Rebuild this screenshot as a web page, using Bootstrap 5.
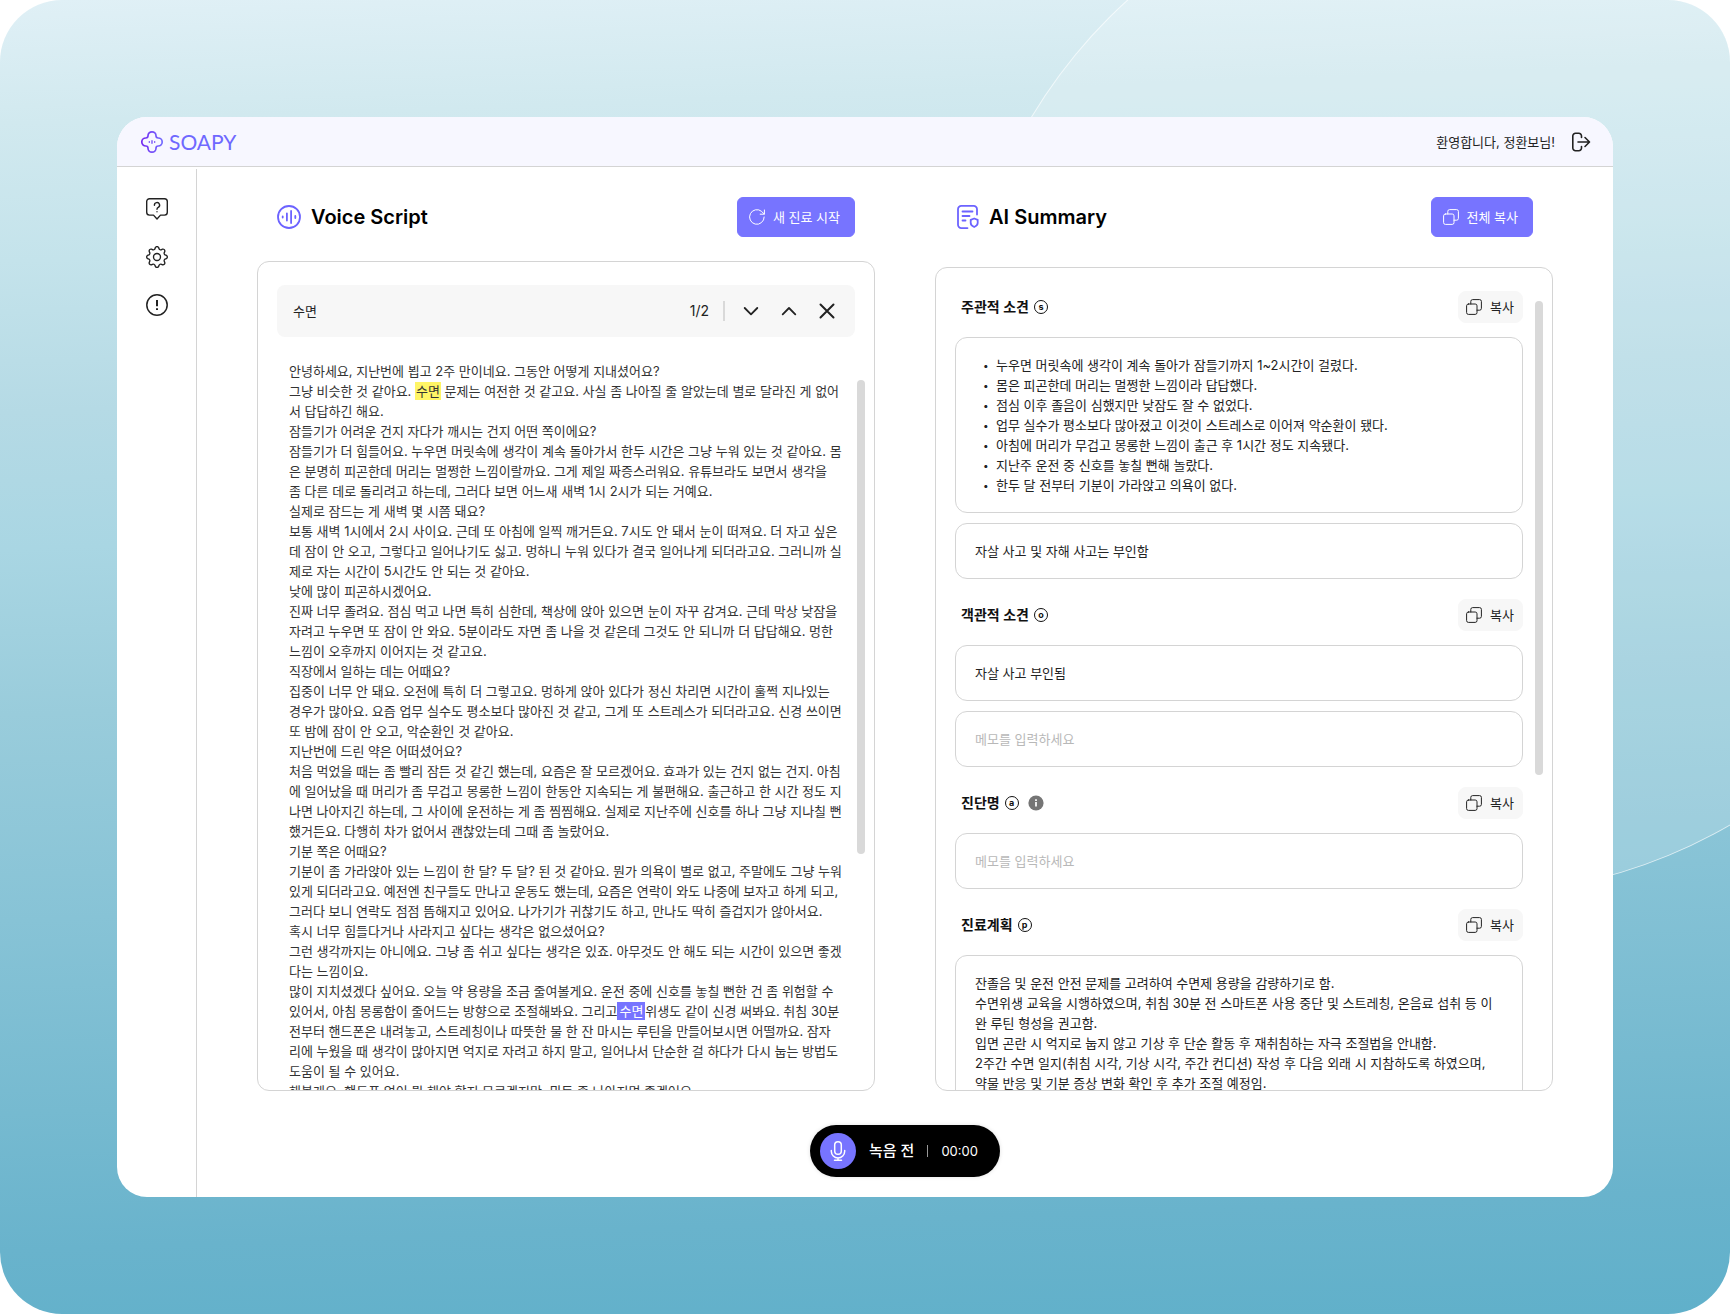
<!DOCTYPE html>
<html lang="ko">
<head>
<meta charset="utf-8">
<meta name="viewport" content="width=device-width, initial-scale=1">
<title>SOAPY</title>
<link href="https://cdn.jsdelivr.net/npm/bootstrap@5.3.0/dist/css/bootstrap.min.css" rel="stylesheet">
<style>
  :root { --soapy: #7774ff; --soapy-deep: #6c63ff; --line: #d4d4d4; --soft: #f7f7f7; }
  body { font-family: Inter, "Noto Sans CJK KR", sans-serif; font-size: 13px; line-height: 20px; color: #222; background: #fff; }
  svg { display: block; flex: none; fill: none; stroke: currentColor; stroke-linecap: round; stroke-linejoin: round; }
  .scene { position: relative; overflow: hidden; height: 100vh; min-height: 700px; padding: 117px; border-radius: 62px;
    background: linear-gradient(178deg, #e0f0f6 0%, #d1e9ef 9%, #c4e3eb 19%, #b5dae5 30%, #a9d6e3 40%, #99ccdb 52%, #87c3d6 67%, #76bad0 81%, #69b3cc 91%, #60b0ca 100%); }
  .halo { position: absolute; left: 958px; top: -133px; width: 1028px; height: 1028px; border-radius: 50%;
    background: rgba(255,255,255,.17); border: 1px solid rgba(255,255,255,.65); }
  .app-window { position: relative; height: 100%; border-radius: 30px; overflow: hidden; background: #fff; }
  .topbar { height: 50px; padding: 0 22px 0 23px; background: #f7f7ff; border-bottom: 1px solid var(--line); }
  .brand { font-family: Lato, sans-serif; font-size: 21px; color: #6f68ff; text-decoration: none; gap: 5px; }
  .side { width: 80px; margin-top: 2px; padding-top: 28px; gap: 24px; border-right: 1px solid var(--line); }
  .bare { display: block; padding: 0; border: 0; background: none; color: #222; }
  .workspace { padding: 30px 60px 20px; }
  .columns { gap: 60px; margin-bottom: 34px; }
  .pane { flex: 1 1 0; min-width: 0; min-height: 0; }
  .pane-head { height: 40px; padding: 0 20px; }
  .pane-title { font-size: 20px; line-height: 24px; font-weight: 600; color: #000; }
  .btn-soapy { --bs-btn-color: #fff; --bs-btn-bg: var(--soapy); --bs-btn-border-color: var(--soapy); --bs-btn-hover-color: #fff; --bs-btn-hover-bg: var(--soapy-deep);
    --bs-btn-font-size: 13px; --bs-btn-line-height: 20px; --bs-btn-padding-x: 11px; --bs-btn-padding-y: 9px; --bs-btn-border-radius: 6px; padding-right: 14px; }
  .btn-copy { --bs-btn-color: #222; --bs-btn-bg: var(--soft); --bs-btn-border-color: var(--soft); --bs-btn-hover-bg: #ececec;
    --bs-btn-font-size: 13px; --bs-btn-line-height: 20px; --bs-btn-padding-x: 8px; --bs-btn-padding-y: 5px; --bs-btn-border-radius: 8px; padding-left: 7px; }
  .panel { border: 1px solid var(--line); border-radius: 12px; overflow: hidden; min-height: 0; }
  .finder { height: 52px; margin: 23px 19px 24px; padding: 0 16px; gap: 14px; border-radius: 8px; background: var(--soft); }
  .finder input { min-width: 0; border: 0; padding: 0; background: none; font-size: 13px; color: #222; outline: 0; }
  .finder-rule { width: 2px; height: 20px; background: #d9d9d9; }
  .script-text { padding-left: 31px; color: #333; }
  .script-text p { margin: 0; }
  .hit, .hit-now { padding: 1px; background: #fff566; }
  .hit-now { padding: 1px 2px; color: #fff; background: var(--soapy); }
  .thumb { width: 8px; height: 474px; margin-right: 9px; border-radius: 4px; background: #d9d9d9; }
  .notes { padding: 23px 12px 0 19px; min-width: 0; }
  .note { margin-bottom: 20px; }
  .note-head { height: 32px; margin-bottom: 14px; padding-left: 6px; }
  .note-title { display: flex; align-items: center; gap: 5px; margin: 0; font-size: 14px; line-height: 20px; font-weight: 600; color: #111; }
  .ring { display: flex; align-items: center; justify-content: center; width: 14px; height: 14px; border: 1px solid #111; border-radius: 50%; font-size: 9px; line-height: 10px; padding-bottom: 1px; font-weight: 700; }
  .note-box { padding: 17px 19px; border: 1px solid var(--line); border-radius: 12px; font-size: 13px; line-height: 20px; color: #222; background: #fff; resize: none; overflow: hidden; }
  .note-box + .note-box { margin-top: 10px; }
  .note-box::placeholder { color: #b8b8b8; }
  .note-box ul { padding-left: 21px; list-style: none; }
  .note-box li::before { content: "•"; float: left; margin-left: -13px; font-size: 10px; }
  .recorder { height: 52px; padding: 0 22px 0 10px; gap: 13px; border: 0; color: #fff; background: #000; box-shadow: 0 0 4px rgba(0,0,0,.12); }
  .rec-dot { width: 36px; height: 36px; background: var(--soapy); }
  .rec-label { font-size: 15px; font-weight: 500; }
  .rec-rule { width: 1px; height: 12px; background: #999; }
</style>
</head>
<body>
<svg width="0" height="0" class="position-absolute" aria-hidden="true">
  <symbol id="copy" viewBox="0 0 16 16"><rect x=".6" y="5" width="10.4" height="10.4" rx="1.8"/><path d="M4.8 5V2.4A1.8 1.8 0 0 1 6.6.6h7A1.8 1.8 0 0 1 15.4 2.4v7a1.8 1.8 0 0 1-1.8 1.8H11"/></symbol>
</svg>
<div class="scene">
  <div class="halo"></div>
  <div class="app-window d-flex flex-column">
    <header class="topbar d-flex align-items-center justify-content-between flex-shrink-0">
      <a href="#" class="brand d-flex align-items-center">
        <svg width="24" height="24" viewBox="0 0 24 24" stroke="url(#lg)" stroke-width="1.7">
          <defs><linearGradient id="lg" gradientUnits="userSpaceOnUse" x1="1" y1="12" x2="23" y2="12"><stop stop-color="#7429f0"/><stop offset="1" stop-color="#736dff"/></linearGradient></defs>
          <path style="stroke:url(#lg)" d="M8 5.8a4 4 0 0 1 8 0 2.2 2.2 0 0 0 2.2 2.2 4 4 0 0 1 0 8 2.2 2.2 0 0 0-2.2 2.2 4 4 0 0 1-8 0A2.2 2.2 0 0 0 5.8 16a4 4 0 0 1 0-8A2.2 2.2 0 0 0 8 5.8Z"/>
          <path stroke="#7048f6" stroke-width="1.3" d="M9.3 11.7v.6M12 10.7v2.6M14.7 11.7v.6"/>
        </svg>
        <span>SOAPY</span>
      </a>
      <div class="d-flex align-items-center gap-3">
        <span>환영합니다, 정환보님!</span>
        <button class="bare" aria-label="로그아웃"><svg width="20" height="20" viewBox="0 0 20 20" stroke-width="1.6"><path d="M10.500 5.500V4A2.700 2.700 0 0 0 7.800 1.300H4.500A2.700 2.700 0 0 0 1.800 4v12a2.700 2.700 0 0 0 2.700 2.700h3.300a2.700 2.700 0 0 0 2.700-2.700v-1.500M7 10h11.300M14 5.500l4.500 4.500-4.500 4.500"/></svg></button>
      </div>
    </header>
    <div class="d-flex flex-grow-1" style="min-height:0">
      <nav class="side d-flex flex-column align-items-center flex-shrink-0" aria-label="메뉴">
        <button class="bare" aria-label="도움말"><svg width="24" height="24" viewBox="0 0 24 24" stroke-width="1.4"><path d="M4.500 1.700h15a2.800 2.800 0 0 1 2.800 2.800v10.800a2.800 2.800 0 0 1-2.800 2.800h-4L12 22l-3.500-3.900h-4a2.800 2.800 0 0 1-2.800-2.800V4.500a2.800 2.800 0 0 1 2.800-2.800Z"/><path d="M9.400 8.200a2.600 2.600 0 1 1 3.900 2.200c-.9.500-1.300.9-1.300 1.900M12 14.700v.1"/></svg></button>
        <button class="bare" aria-label="설정"><svg width="24" height="24" viewBox="-1 -1 24 24"><g transform="scale(1.375)" fill="currentColor" stroke="none"><path d="M8 4.954a3.046 3.046 0 1 0 0 6.092 3.046 3.046 0 0 0 0-6.092M5.954 8a2.046 2.046 0 1 1 4.092 0 2.046 2.046 0 0 1-4.092 0"/><path d="M9.796 1.343c-.527-1.790-3.065-1.790-3.592 0l-.094.319a.873.873 0 0 1-1.255.52l-.292-.16c-1.640-.892-3.433.902-2.540 2.541l.159.292a.873.873 0 0 1-.52 1.255l-.319.094c-1.790.527-1.790 3.065 0 3.592l.319.094a.873.873 0 0 1 .52 1.255l-.16.292c-.892 1.640.901 3.434 2.541 2.540l.292-.159a.873.873 0 0 1 1.255.52l.094.319c.527 1.790 3.065 1.790 3.592 0l.094-.319a.873.873 0 0 1 1.255-.52l.292.16c1.640.893 3.434-.902 2.540-2.541l-.159-.292a.873.873 0 0 1 .52-1.255l.319-.094c1.790-.527 1.790-3.065 0-3.592l-.319-.094a.873.873 0 0 1-.52-1.255l.16-.292c.893-1.640-.902-3.433-2.541-2.540l-.292.159a.873.873 0 0 1-1.255-.52zm-2.633.283c.246-.835 1.428-.835 1.674 0l.094.319a1.873 1.873 0 0 0 2.693 1.115l.291-.16c.764-.415 1.600.42 1.184 1.185l-.159.292a1.873 1.873 0 0 0 1.116 2.692l.318.094c.835.246.835 1.428 0 1.674l-.319.094a1.873 1.873 0 0 0-1.115 2.693l.16.291c.415.764-.42 1.600-1.185 1.184l-.291-.159a1.873 1.873 0 0 0-2.693 1.116l-.094.318c-.246.835-1.428.835-1.674 0l-.094-.319a1.873 1.873 0 0 0-2.692-1.115l-.292.16c-.764.415-1.600-.42-1.184-1.185l.159-.291A1.873 1.873 0 0 0 1.945 8.930l-.319-.094c-.835-.246-.835-1.428 0-1.674l.319-.094A1.873 1.873 0 0 0 3.060 4.377l-.16-.292c-.415-.764.42-1.600 1.185-1.184l.292.159a1.873 1.873 0 0 0 2.692-1.115z"/></g></svg></button>
        <button class="bare" aria-label="알림"><svg width="24" height="24" viewBox="0 0 24 24" stroke-width="1.5"><circle cx="12" cy="12" r="10.2"/><path stroke-width="2" stroke-linecap="butt" d="M12 7v6.300M12 15.200v1.900"/></svg></button>
      </nav>
      <main class="workspace d-flex flex-column flex-grow-1">
        <div class="columns d-flex flex-grow-1" style="min-height:0">
          <section class="pane d-flex flex-column">
            <div class="pane-head d-flex align-items-center justify-content-between flex-shrink-0 mb-4">
              <div class="d-flex align-items-center" style="gap:10px">
                <svg width="24" height="24" viewBox="0 0 24 24" stroke-width="1.8" style="color:#6c63ff"><circle cx="12" cy="12" r="11"/><path d="M5.700 11.500v1M9.900 8.500v7M14.100 6v12M18.300 11v2"/></svg>
                <h2 class="pane-title m-0">Voice Script</h2>
              </div>
              <button class="btn btn-soapy d-flex align-items-center gap-2">
                <svg width="16" height="16" viewBox="0 0 16 16" stroke-width="1"><path d="M15.200 8a7.300 7.300 0 1 1-2.600-5.600l2.700 2.700M15.400 1v4.200h-4.200"/></svg>새 진료 시작
              </button>
            </div>
            <div class="panel d-flex flex-column flex-grow-1">
              <div class="finder d-flex align-items-center flex-shrink-0">
                <input class="flex-grow-1" type="text" value="수면" aria-label="스크립트 검색">
                <span style="font-size:14px">1/2</span>
                <span class="finder-rule"></span>
                <button class="bare" aria-label="다음"><svg width="24" height="24" viewBox="0 0 24 24" stroke-width="1.8"><path d="m5.700 9 6.300 6.300L18.300 9"/></svg></button>
                <button class="bare" aria-label="이전"><svg width="24" height="24" viewBox="0 0 24 24" stroke-width="1.8"><path d="M5.700 15.300 12 9l6.300 6.300"/></svg></button>
                <button class="bare" aria-label="닫기"><svg width="24" height="24" viewBox="0 0 24 24" stroke-width="2"><path d="m5.500 5.500 13 13M18.500 5.500l-13 13"/></svg></button>
              </div>
              <div class="d-flex flex-grow-1" style="min-height:0">
                <div class="script-text flex-grow-1">
                  <p>안녕하세요, 지난번에 뵙고 2주 만이네요. 그동안 어떻게 지내셨어요?</p>
                  <p>그냥 비슷한 것 같아요. <span class="hit">수면</span> 문제는 여전한 것 같고요. 사실 좀 나아질 줄 알았는데 별로 달라진 게 없어<br>서 답답하긴 해요.</p>
                  <p>잠들기가 어려운 건지 자다가 깨시는 건지 어떤 쪽이에요?</p>
                  <p>잠들기가 더 힘들어요. 누우면 머릿속에 생각이 계속 돌아가서 한두 시간은 그냥 누워 있는 것 같아요. 몸<br>은 분명히 피곤한데 머리는 멀쩡한 느낌이랄까요. 그게 제일 짜증스러워요. 유튜브라도 보면서 생각을<br>좀 다른 데로 돌리려고 하는데, 그러다 보면 어느새 새벽 1시 2시가 되는 거예요.</p>
                  <p>실제로 잠드는 게 새벽 몇 시쯤 돼요?</p>
                  <p>보통 새벽 1시에서 2시 사이요. 근데 또 아침에 일찍 깨거든요. 7시도 안 돼서 눈이 떠져요. 더 자고 싶은<br>데 잠이 안 오고, 그렇다고 일어나기도 싫고. 멍하니 누워 있다가 결국 일어나게 되더라고요. 그러니까 실<br>제로 자는 시간이 5시간도 안 되는 것 같아요.</p>
                  <p>낮에 많이 피곤하시겠어요.</p>
                  <p>진짜 너무 졸려요. 점심 먹고 나면 특히 심한데, 책상에 앉아 있으면 눈이 자꾸 감겨요. 근데 막상 낮잠을<br>자려고 누우면 또 잠이 안 와요. 5분이라도 자면 좀 나을 것 같은데 그것도 안 되니까 더 답답해요. 멍한<br>느낌이 오후까지 이어지는 것 같고요.</p>
                  <p>직장에서 일하는 데는 어때요?</p>
                  <p>집중이 너무 안 돼요. 오전에 특히 더 그렇고요. 멍하게 앉아 있다가 정신 차리면 시간이 훌쩍 지나있는<br>경우가 많아요. 요즘 업무 실수도 평소보다 많아진 것 같고, 그게 또 스트레스가 되더라고요. 신경 쓰이면<br>또 밤에 잠이 안 오고, 악순환인 것 같아요.</p>
                  <p>지난번에 드린 약은 어떠셨어요?</p>
                  <p>처음 먹었을 때는 좀 빨리 잠든 것 같긴 했는데, 요즘은 잘 모르겠어요. 효과가 있는 건지 없는 건지. 아침<br>에 일어났을 때 머리가 좀 무겁고 몽롱한 느낌이 한동안 지속되는 게 불편해요. 출근하고 한 시간 정도 지<br>나면 나아지긴 하는데, 그 사이에 운전하는 게 좀 찜찜해요. 실제로 지난주에 신호를 하나 그냥 지나칠 뻔<br>했거든요. 다행히 차가 없어서 괜찮았는데 그때 좀 놀랐어요.</p>
                  <p>기분 쪽은 어때요?</p>
                  <p>기분이 좀 가라앉아 있는 느낌이 한 달? 두 달? 된 것 같아요. 뭔가 의욕이 별로 없고, 주말에도 그냥 누워<br>있게 되더라고요. 예전엔 친구들도 만나고 운동도 했는데, 요즘은 연락이 와도 나중에 보자고 하게 되고,<br>그러다 보니 연락도 점점 뜸해지고 있어요. 나가기가 귀찮기도 하고, 만나도 딱히 즐겁지가 않아서요.</p>
                  <p>혹시 너무 힘들다거나 사라지고 싶다는 생각은 없으셨어요?</p>
                  <p>그런 생각까지는 아니에요. 그냥 좀 쉬고 싶다는 생각은 있죠. 아무것도 안 해도 되는 시간이 있으면 좋겠<br>다는 느낌이요.</p>
                  <p>많이 지치셨겠다 싶어요. 오늘 약 용량을 조금 줄여볼게요. 운전 중에 신호를 놓칠 뻔한 건 좀 위험할 수<br>있어서, 아침 몽롱함이 줄어드는 방향으로 조절해봐요. 그리고<span class="hit-now">수면</span>위생도 같이 신경 써봐요. 취침 30분<br>전부터 핸드폰은 내려놓고, 스트레칭이나 따뜻한 물 한 잔 마시는 루틴을 만들어보시면 어떨까요. 잠자<br>리에 누웠을 때 생각이 많아지면 억지로 자려고 하지 말고, 일어나서 단순한 걸 하다가 다시 눕는 방법도<br>도움이 될 수 있어요.</p>
                  <p>해볼게요. 핸드폰 없이 뭘 해야 할지 모르겠지만, 뭐든 좀 나아지면 좋겠어요.</p>
                </div>
                <div class="thumb flex-shrink-0" style="margin-top:19px"></div>
              </div>
            </div>
          </section>
          <section class="pane d-flex flex-column">
            <div class="pane-head d-flex align-items-center justify-content-between flex-shrink-0" style="margin-bottom:30px">
              <div class="d-flex align-items-center" style="gap:10px">
                <svg width="24" height="24" viewBox="-1 0 24 24" stroke-width="1.8" style="color:#6c63ff"><path d="M21 9.500V4.200A3.300 3.300 0 0 0 17.700.9H5.300A3.300 3.300 0 0 0 2 4.200v15.600a3.300 3.300 0 0 0 3.300 3.300H11.500M6.500 6.500h10M6.500 11h7M6.500 15.500h3M18.200 13.500l3.500 1.300v3.200c0 2-1.700 3.200-3.500 4-1.800-.8-3.500-2-3.500-4v-3.200Z"/></svg>
                <h2 class="pane-title m-0">AI Summary</h2>
              </div>
              <button class="btn btn-soapy d-flex align-items-center gap-2"><svg width="16" height="16"><use href="#copy"/></svg>전체 복사</button>
            </div>
            <div class="panel d-flex flex-grow-1">
              <div class="notes flex-grow-1">
                <div class="note">
                  <div class="note-head d-flex align-items-center justify-content-between">
                    <h3 class="note-title">주관적 소견 <span class="ring">s</span></h3>
                    <button class="btn btn-copy d-flex align-items-center gap-2"><svg width="16" height="16"><use href="#copy"/></svg>복사</button>
                  </div>
                  <div class="note-box">
                    <ul class="m-0">
                      <li>누우면 머릿속에 생각이 계속 돌아가 잠들기까지 1~2시간이 걸렸다.</li>
                      <li>몸은 피곤한데 머리는 멀쩡한 느낌이라 답답했다.</li>
                      <li>점심 이후 졸음이 심했지만 낮잠도 잘 수 없었다.</li>
                      <li>업무 실수가 평소보다 많아졌고 이것이 스트레스로 이어져 악순환이 됐다.</li>
                      <li>아침에 머리가 무겁고 몽롱한 느낌이 출근 후 1시간 정도 지속됐다.</li>
                      <li>지난주 운전 중 신호를 놓칠 뻔해 놀랐다.</li>
                      <li>한두 달 전부터 기분이 가라앉고 의욕이 없다.</li>
                    </ul>
                  </div>
                  <input class="note-box form-control" type="text" value="자살 사고 및 자해 사고는 부인함" aria-label="주관적 소견 메모">
                </div>
                <div class="note">
                  <div class="note-head d-flex align-items-center justify-content-between">
                    <h3 class="note-title">객관적 소견 <span class="ring">o</span></h3>
                    <button class="btn btn-copy d-flex align-items-center gap-2"><svg width="16" height="16"><use href="#copy"/></svg>복사</button>
                  </div>
                  <input class="note-box form-control" type="text" value="자살 사고 부인됨" aria-label="객관적 소견">
                  <input class="note-box form-control" type="text" placeholder="메모를 입력하세요" aria-label="객관적 소견 메모">
                </div>
                <div class="note">
                  <div class="note-head d-flex align-items-center justify-content-between">
                    <div class="d-flex align-items-center gap-2">
                      <h3 class="note-title">진단명 <span class="ring">a</span></h3>
                      <svg width="18" height="18" viewBox="-1 -1 18 18" role="img" aria-label="안내"><circle cx="8" cy="8" r="7.6" fill="#757575" stroke="none"/><path stroke="#fff" stroke-width="1.7" stroke-linecap="butt" d="M8 7v4.500M8 4.200v1.700"/></svg>
                    </div>
                    <button class="btn btn-copy d-flex align-items-center gap-2"><svg width="16" height="16"><use href="#copy"/></svg>복사</button>
                  </div>
                  <input class="note-box form-control" type="text" placeholder="메모를 입력하세요" aria-label="진단명 메모">
                </div>
                <div class="note">
                  <div class="note-head d-flex align-items-center justify-content-between">
                    <h3 class="note-title">진료계획 <span class="ring">p</span></h3>
                    <button class="btn btn-copy d-flex align-items-center gap-2"><svg width="16" height="16"><use href="#copy"/></svg>복사</button>
                  </div>
                  <textarea class="note-box form-control" rows="8" aria-label="진료계획">잔졸음 및 운전 안전 문제를 고려하여 수면제 용량을 감량하기로 함.
수면위생 교육을 시행하였으며, 취침 30분 전 스마트폰 사용 중단 및 스트레칭, 온음료 섭취 등 이완 루틴 형성을 권고함.
입면 곤란 시 억지로 눕지 않고 기상 후 단순 활동 후 재취침하는 자극 조절법을 안내함.
2주간 수면 일지(취침 시각, 기상 시각, 주간 컨디션) 작성 후 다음 외래 시 지참하도록 하였으며,
약물 반응 및 기분 증상 변화 확인 후 추가 조절 예정임.</textarea>
                </div>
              </div>
              <div class="thumb flex-shrink-0" style="margin-top:33px"></div>
            </div>
          </section>
        </div>
        <button class="recorder d-flex align-items-center rounded-pill align-self-center flex-shrink-0">
          <span class="rec-dot rounded-circle d-flex align-items-center justify-content-center"><svg width="20" height="20" viewBox="0 0 20 20" stroke-width="1.5"><rect x="6.7" y=".8" width="6.6" height="12.4" rx="3.3"/><path d="M3.300 9.500v.7a6.700 6.700 0 0 0 13.400 0v-.7M10 17v2M6.500 19.200h7"/></svg></span>
          <span class="rec-label">녹음 전</span>
          <span class="rec-rule"></span>
          <span>00:00</span>
        </button>
      </main>
    </div>
  </div>
</div>
<script src="https://cdn.jsdelivr.net/npm/bootstrap@5.3.0/dist/js/bootstrap.bundle.min.js"></script>
</body>
</html>
